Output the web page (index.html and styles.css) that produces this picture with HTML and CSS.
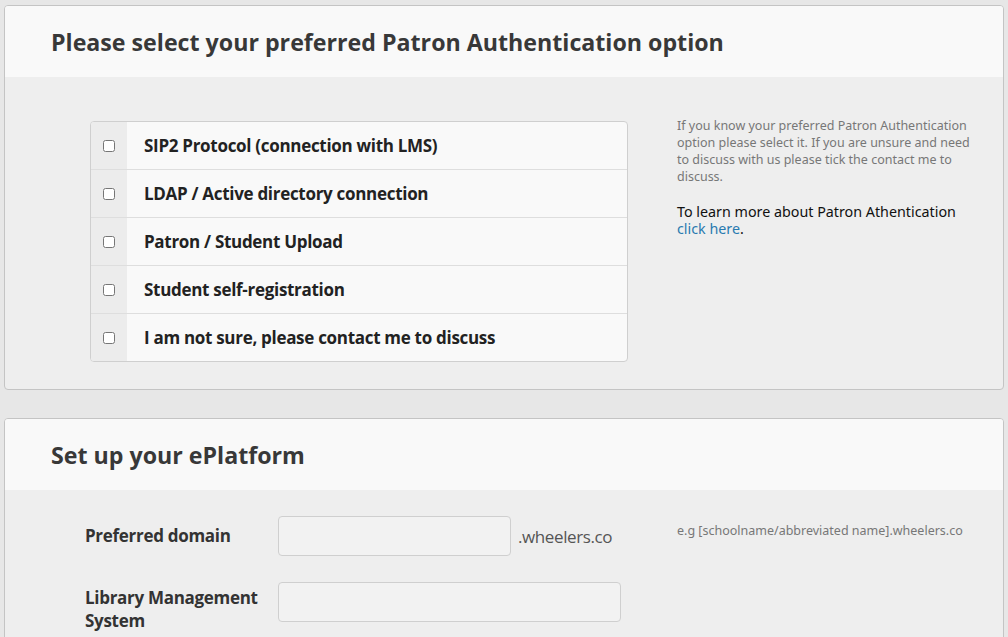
FILE: index.html
```html
<!DOCTYPE html>
<html>
<head>
<meta charset="utf-8">
<link rel="stylesheet" href="styles.css">
</head>
<body>
<div class="page">
  <section class="panel panel-auth">
    <header class="panel-head"><h2>Please select your preferred Patron Authentication option</h2></header>
    <div class="panel-body auth-body">
      <ul class="options">
        <li class="option"><span class="check"><input type="checkbox"></span><span class="label">SIP2 Protocol (connection with LMS)</span></li>
        <li class="option"><span class="check"><input type="checkbox"></span><span class="label">LDAP / Active directory connection</span></li>
        <li class="option"><span class="check"><input type="checkbox"></span><span class="label">Patron / Student Upload</span></li>
        <li class="option"><span class="check"><input type="checkbox"></span><span class="label">Student self-registration</span></li>
        <li class="option"><span class="check"><input type="checkbox"></span><span class="label">I am not sure, please contact me to discuss</span></li>
      </ul>
      <div class="aside">
        <p class="help">If you know your preferred Patron Authentication option please select it. If you are unsure and need to discuss with us please tick the contact me to discuss.</p>
        <p class="learn">To learn more about Patron Athentication <a href="#">click here</a>.</p>
      </div>
    </div>
  </section>
  <section class="panel panel-setup">
    <header class="panel-head"><h2>Set up your ePlatform</h2></header>
    <div class="panel-body setup-body">
      <div class="form-row">
        <label class="form-label">Preferred domain</label>
        <div class="field"><input class="text-input domain" type="text"><span class="suffix">.wheelers.co</span></div>
        <p class="hint">e.g [schoolname/abbreviated name].wheelers.co</p>
      </div>
      <div class="form-row">
        <label class="form-label form-label-multi">Library Management System</label>
        <div class="field"><input class="text-input lms" type="text"></div>
        <p class="hint"></p>
      </div>
    </div>
  </section>
</div>
</body>
</html>
```
FILE: styles.css
```css
html, body {
  margin: 0;
  padding: 0;
}
body {
  background: #e7e7e7;
  font-family: "Open Sans", "Noto Sans", sans-serif;
  color: #333;
}
.page {
  padding: 5px 4px 0 4px;
  width: 1000px;
  display: flex;
  flex-direction: column;
  gap: 28px;
}
.panel {
  border: 1px solid #c4c4c4;
  border-radius: 4px;
  background: #eeeeee;
  overflow: hidden;
}
.panel-head {
  background: #f9f9f9;
  height: 71px;
  display: flex;
  align-items: center;
  padding-left: 46px;
}
.panel-head h2 {
  margin: 0;
  font-size: 23.2px;
  font-weight: 700;
  color: #383838;
}
.auth-body {
  display: flex;
  padding: 44px 30px 27px 85px;
  gap: 49px;
  align-items: flex-start;
}
.options {
  list-style: none;
  margin: 0;
  padding: 0;
  width: 536px;
  flex-shrink: 0;
  border: 1px solid #cfcfcf;
  border-radius: 4px;
  overflow: hidden;
  background: #f9f9f9;
}
.option {
  display: flex;
  height: 47px;
  border-top: 1px solid #dedede;
}
.option:first-child {
  border-top: none;
}
.check {
  width: 36px;
  background: #ececec;
  display: flex;
  align-items: center;
  justify-content: center;
}
.check input {
  margin: 0;
  width: 12px;
  height: 12px;
}
.label {
  padding-left: 17px;
  display: flex;
  align-items: center;
  font-size: 17px;
  font-weight: 700;
  color: #222;
  letter-spacing: -0.3px;
}
.aside {
  flex: 1;
}
.help {
  margin: -4px 0 0 0;
  font-family: "Noto Sans", sans-serif;
  font-size: 12.5px;
  line-height: 17px;
  color: #777;
}
.learn {
  margin: 18px 0 0 0;
  font-family: "Noto Sans", sans-serif;
  font-size: 14.3px;
  line-height: 17px;
  color: #111;
}
.learn a {
  color: #2a7ab0;
  text-decoration: none;
}
.setup-body {
  padding: 26px 30px 40px 80px;
  display: flex;
  flex-direction: column;
  gap: 26px;
}
.form-row {
  display: flex;
  align-items: flex-start;
}
.form-label {
  width: 193px;
  font-size: 17px;
  font-weight: 700;
  color: #333;
  line-height: 23px;
  padding-top: 8px;
  letter-spacing: -0.3px;
}
.form-label-multi {
  padding-top: 4px;
}
.field {
  width: 350px;
  display: flex;
  align-items: center;
  gap: 7px;
}
.text-input {
  box-sizing: border-box;
  height: 40px;
  border: 1px solid #cfcfcf;
  border-radius: 4px;
  background: #f2f2f2;
  margin: 0;
  padding: 0 8px;
}
.domain {
  width: 233px;
}
.lms {
  width: 343px;
}
.suffix {
  font-size: 17px;
  color: #555;
  letter-spacing: -0.4px;
}
.hint {
  margin: 6px 0 0 49px;
  font-family: "Noto Sans", sans-serif;
  font-size: 12.5px;
  color: #777;
}
```
